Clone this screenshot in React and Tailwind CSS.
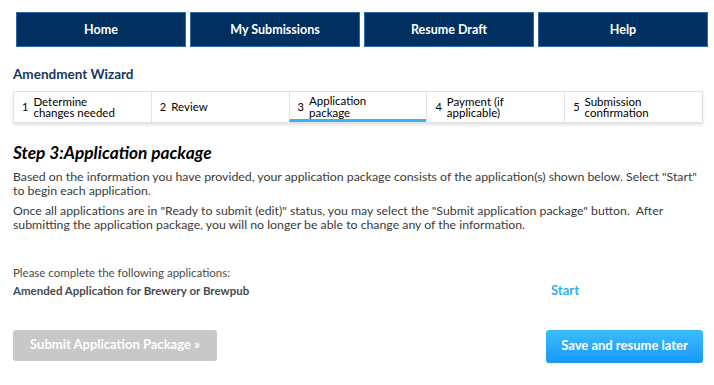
const navItems = ["Home", "My Submissions", "Resume Draft", "Help"];

const steps = [
  { n: 1, label: ["Determine", "changes needed"] },
  { n: 2, label: ["Review"] },
  { n: 3, label: ["Application", "package"], active: true },
  { n: 4, label: ["Payment (if", "applicable)"] },
  { n: 5, label: ["Submission", "confirmation"] },
];

export default function App() {
  return (
    <div
      className="h-[385px] w-[714px] bg-white text-[#333]"
      style={{ fontFamily: 'Lato, "Open Sans", sans-serif' }}
    >
      <nav className="flex gap-[4px] pl-[16px] pt-[12px]">
        {navItems.map((item) => (
          <button
            className="h-[35px] w-[170px] border border-[#2e6aa8] bg-[#00305f] pt-[1px] text-[12.5px] font-bold text-white"
            key={item}
            type="button"
          >
            {item}
          </button>
        ))}
      </nav>

      <div className="pl-[13px] pr-[11px]">
        <h1 className="mt-[19px] text-[13.5px] font-bold leading-[16px] text-[#17375e]">
          Amendment Wizard
        </h1>

        <ol className="mt-[9px] flex h-[32px] border border-[#e1e1e1] shadow-[0_2px_3px_rgba(0,0,0,0.12)]">
          {steps.map((step) => (
            <li
              className={`flex flex-1 items-center gap-[5px] border-l border-[#e1e1e1] pl-[8px] text-[11.5px] leading-[11.5px] text-black first:border-l-0 ${
                step.active ? "border-b-[3px] border-b-[#38b4f0] pt-[2px]" : ""
              }`}
              key={step.n}
            >
              <span className="text-[11px]">{step.n}</span>
              <span>
                {step.label.map((line) => (
                  <span className="block" key={line}>
                    {line}
                  </span>
                ))}
              </span>
            </li>
          ))}
        </ol>

        <h2 className="mt-[20px] text-[17.3px] font-bold italic leading-[20px] text-black">
          Step 3:Application package
        </h2>

        <p className="mt-[7px] text-[12.3px] leading-[14px] text-[#3a3a3a]">
          Based on the information you have provided, your application package
          consists of the application(s) shown below. Select "Start" to begin
          each application.
        </p>
        <p className="mt-[6px] pr-[20px] text-[12.3px] leading-[14px] text-[#3a3a3a]">
          Once all applications are in "Ready to submit (edit)" status, you may
          select the "Submit application package" button.&nbsp; After
          submitting the application package, you will no longer be able to
          change any of the information.
        </p>

        <div className="mt-[33px] text-[11.5px] leading-[16px] text-[#4a4a4a]">
          Please complete the following applications:
        </div>
        <div className="flex items-center">
          <span className="w-[538px] text-[11.5px] font-bold leading-[16px] text-[#4a4a4a]">
            Amended Application for Brewery or Brewpub
          </span>
          <span className="text-[13px] font-bold text-[#2eb0f5]">Start</span>
        </div>

        <div className="mt-[29px] flex justify-between">
          <button
            className="h-[31px] w-[204px] rounded-[3px] bg-[#c8c8c8] text-[13px] font-bold text-white"
            type="button"
          >
            Submit Application Package »
          </button>
          <button
            className="h-[33px] w-[157px] rounded-[3px] bg-gradient-to-b from-[#3cbcff] to-[#1598f6] text-[13px] font-bold text-white"
            type="button"
          >
            Save and resume later
          </button>
        </div>
      </div>
    </div>
  );
}
